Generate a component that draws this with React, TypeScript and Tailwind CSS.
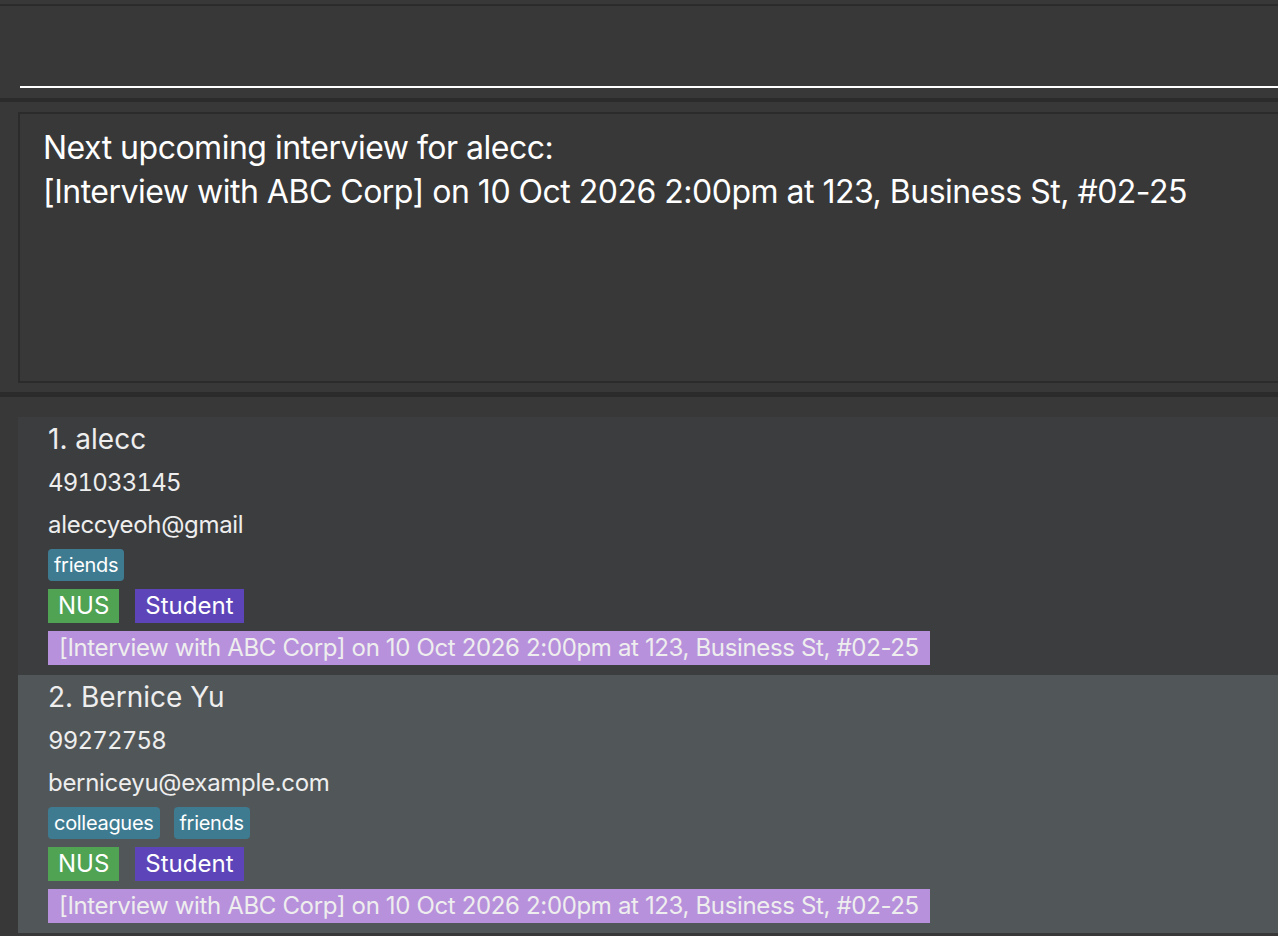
import React from "react";

const font = { fontFamily: "Inter, 'Noto Sans', sans-serif" };

function Card({ idx, name, phone, email, tags, bg }: { idx: number; name: string; phone: string; email: string; tags: string[]; bg: string }) {
  return (
    <div className={`${bg} h-[258px] pl-[30px] pt-[2px] flex flex-col text-[#eeeeee]`}>
      <div className="text-[28px] leading-[40px] h-[42px]">{idx}. {name}</div>
      <div className="text-[24px] leading-[44px] h-[44px] tabular-nums tracking-[-0.8px]">{phone}</div>
      <div className="text-[24px] leading-[40px] h-[44px] tracking-[-0.3px]">{email}</div>
      <div className="flex gap-[14px] h-[40px] items-start">
        {tags.map((t) => (
          <span key={t} className="bg-[#3e7b91] rounded-[4px] px-[6px] h-[32px] leading-[32px] text-[20px] tracking-[-0.3px] text-white">{t}</span>
        ))}
      </div>
      <div className="flex gap-[16px] h-[42px] items-start">
        <span className="bg-[#4fa352] px-[10px] h-[34px] leading-[34px] text-[24px] text-white">NUS</span>
        <span className="bg-[#5d45b9] px-[10px] h-[34px] leading-[34px] text-[24px] text-white">Student</span>
      </div>
      <div className="flex">
        <span className="bg-[#b891dc] px-[11px] h-[34px] leading-[34px] text-[24px] tracking-[-0.35px] text-[#eeeeee]">[Interview with ABC Corp] on 10 Oct 2026 2:00pm at 123, Business St, #02-25</span>
      </div>
    </div>
  );
}

export default function App() {
  return (
    <div className="w-[1278px] h-[936px] bg-[#383838] overflow-hidden flex flex-col" style={font}>
      <div className="h-[4px] bg-[#383838]" />
      <div className="h-[2px] bg-[#2b2b2b]" />
      <div className="h-[92px] flex flex-col justify-end pb-[10px] pl-[20px]">
        <div className="h-[2px] bg-white" />
      </div>
      <div className="h-[4px] bg-[#2b2b2b]" />
      <div className="h-[290px] pt-[10px] pl-[18px] pb-[9px] flex">
        <div className="flex-1 border-2 border-r-0 border-[#2b2b2b] pl-[23px] pt-[12px] text-white text-[32px] leading-[44px] tracking-[-0.5px]">
          <div>Next upcoming interview for alecc:</div>
          <div>[Interview with ABC Corp] on 10 Oct 2026 2:00pm at 123, Business St, #02-25</div>
        </div>
      </div>
      <div className="h-[5px] bg-[#2b2b2b]" />
      <div className="flex-1 pt-[20px] pl-[18px] flex flex-col">
        <Card idx={1} name="alecc" phone="491033145" email="aleccyeoh@gmail" tags={["friends"]} bg="bg-[#3c3d3f]" />
        <Card idx={2} name="Bernice Yu" phone="99272758" email="berniceyu@example.com" tags={["colleagues", "friends"]} bg="bg-[#515658]" />
      </div>
    </div>
  );
}
